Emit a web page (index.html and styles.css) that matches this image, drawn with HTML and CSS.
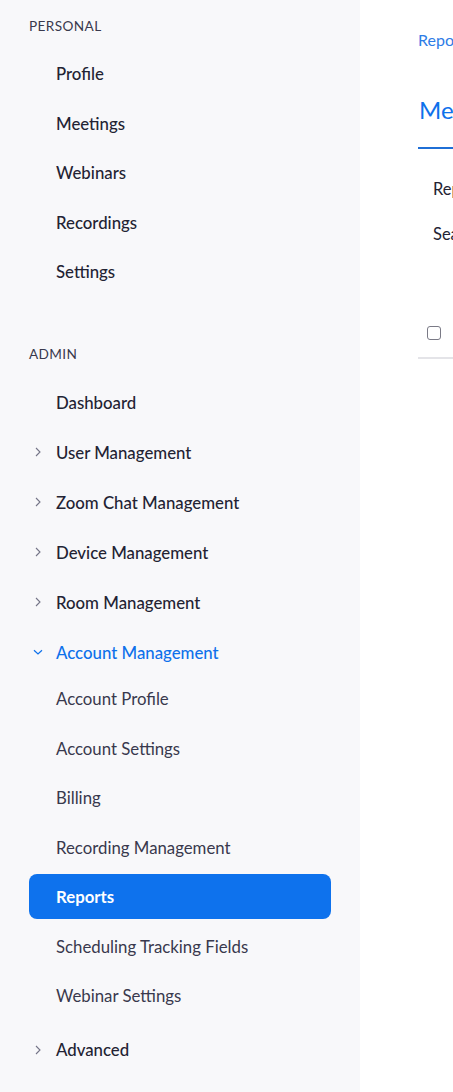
FILE: index.html
```html
<!DOCTYPE html>
<html lang="en">
<head>
<meta charset="utf-8">
<title>Reports</title>
<link rel="stylesheet" href="styles.css">
</head>
<body>
<div class="page">
  <nav class="sidebar">
    <div class="section">
      <div class="section-label">PERSONAL</div>
      <ul class="nav">
        <li class="item"><span class="icon"></span><span class="text">Profile</span></li>
        <li class="item"><span class="icon"></span><span class="text">Meetings</span></li>
        <li class="item"><span class="icon"></span><span class="text">Webinars</span></li>
        <li class="item"><span class="icon"></span><span class="text">Recordings</span></li>
        <li class="item"><span class="icon"></span><span class="text">Settings</span></li>
      </ul>
    </div>
    <div class="section admin">
      <div class="section-label">ADMIN</div>
      <ul class="nav">
        <li class="item"><span class="icon"></span><span class="text">Dashboard</span></li>
        <li class="item"><span class="icon"><svg viewBox="0 0 12 12" width="12" height="12"><path d="M4 2 L8 6 L4 10" fill="none" stroke="#747487" stroke-width="1.1"/></svg></span><span class="text">User Management</span></li>
        <li class="item"><span class="icon"><svg viewBox="0 0 12 12" width="12" height="12"><path d="M4 2 L8 6 L4 10" fill="none" stroke="#747487" stroke-width="1.1"/></svg></span><span class="text">Zoom Chat Management</span></li>
        <li class="item"><span class="icon"><svg viewBox="0 0 12 12" width="12" height="12"><path d="M4 2 L8 6 L4 10" fill="none" stroke="#747487" stroke-width="1.1"/></svg></span><span class="text">Device Management</span></li>
        <li class="item"><span class="icon"><svg viewBox="0 0 12 12" width="12" height="12"><path d="M4 2 L8 6 L4 10" fill="none" stroke="#747487" stroke-width="1.1"/></svg></span><span class="text">Room Management</span></li>
        <li class="item open"><span class="icon"><svg viewBox="0 0 12 12" width="12" height="12"><path d="M2 4.2 L6 8 L10 4.2" fill="none" stroke="#0e71eb" stroke-width="1.2"/></svg></span><span class="text">Account Management</span></li>
        <li>
          <ul class="subnav">
            <li class="sub">Account Profile</li>
            <li class="sub">Account Settings</li>
            <li class="sub">Billing</li>
            <li class="sub">Recording Management</li>
            <li class="sub active">Reports</li>
            <li class="sub">Scheduling Tracking Fields</li>
            <li class="sub">Webinar Settings</li>
          </ul>
        </li>
        <li class="item"><span class="icon"><svg viewBox="0 0 12 12" width="12" height="12"><path d="M4 2 L8 6 L4 10" fill="none" stroke="#747487" stroke-width="1.1"/></svg></span><span class="text">Advanced</span></li>
      </ul>
    </div>
  </nav>
  <main class="main">
    <div class="breadcrumb">Reports &gt; Usage Reports &gt; Meeting</div>
    <div class="tabs"><div class="tab">Meeting</div></div>
    <div class="form-row">Report Type:</div>
    <div class="form-row search">Search by time range</div>
    <div class="table-head"><span class="checkbox"></span><span class="col">Meeting ID</span></div>
  </main>
</div>
</body>
</html>
```
FILE: styles.css
```css
* { box-sizing: border-box; }
html, body { margin: 0; padding: 0; }
body {
  font-family: Lato, "Open Sans", "Liberation Sans", sans-serif;
  background: #ffffff;
  color: #232333;
  overflow: hidden;
}
.page {
  display: flex;
  width: 453px;
  height: 1092px;
  overflow: hidden;
}
.sidebar {
  flex: 0 0 360px;
  width: 360px;
  background: #f8f8fa;
  padding: 16px 0 0 29px;
}
.section-label {
  height: 20px;
  line-height: 20px;
  font-size: 13.6px;
  letter-spacing: 0.4px;
  color: #39394d;
  margin-bottom: 13px;
}
.admin { margin-top: 47.5px; }
.nav, .subnav { list-style: none; margin: 0; padding: 0; }
.item {
  display: flex;
  align-items: center;
  height: 49.5px;
  font-size: 16.8px;
  font-weight: 500;
  color: #232333;
}
.admin .item { height: 50px; }
.icon {
  width: 27px;
  display: flex;
  align-items: center;
  padding-left: 3px;
}
.item.open { color: #0e71eb; }
.subnav { margin-top: -1px; padding-bottom: 2px; }
.sub {
  display: flex;
  align-items: center;
  width: 302px;
  height: 45px;
  margin-bottom: 4.5px;
  padding-left: 27px;
  border-radius: 8px;
  font-size: 16.8px;
  color: #39394d;
}
.sub.active {
  background: #0e72ed;
  color: #ffffff;
  font-weight: 700;
}
.main {
  flex: 1 1 auto;
  min-width: 0;
  overflow: hidden;
  padding: 30px 0 0 58px;
  white-space: nowrap;
}
.breadcrumb {
  font-size: 16px;
  line-height: 20px;
  color: #2e7ce6;
}
.tabs {
  margin-top: 44px;
  border-bottom: 2px solid #1f6fd6;
  width: 600px;
}
.tab {
  font-size: 24px;
  line-height: 32px;
  color: #0e71eb;
  padding: 0 0 21px 1px;
}
.form-row {
  font-size: 16.5px;
  line-height: 20px;
  margin-top: 30px;
  padding-left: 15px;
  color: #232333;
}
.form-row.search { margin-top: 25px; }
.table-head {
  display: flex;
  align-items: center;
  width: 600px;
  margin-top: 80px;
  padding: 0 0 16px 9px;
  border-bottom: 2px solid #e4e4e8;
}
.checkbox {
  width: 14px;
  height: 14px;
  border: 1px solid #7a7a86;
  border-radius: 3px;
  background: #fff;
}
.col {
  margin-left: 20px;
  font-size: 14px;
  color: #232333;
}
```
